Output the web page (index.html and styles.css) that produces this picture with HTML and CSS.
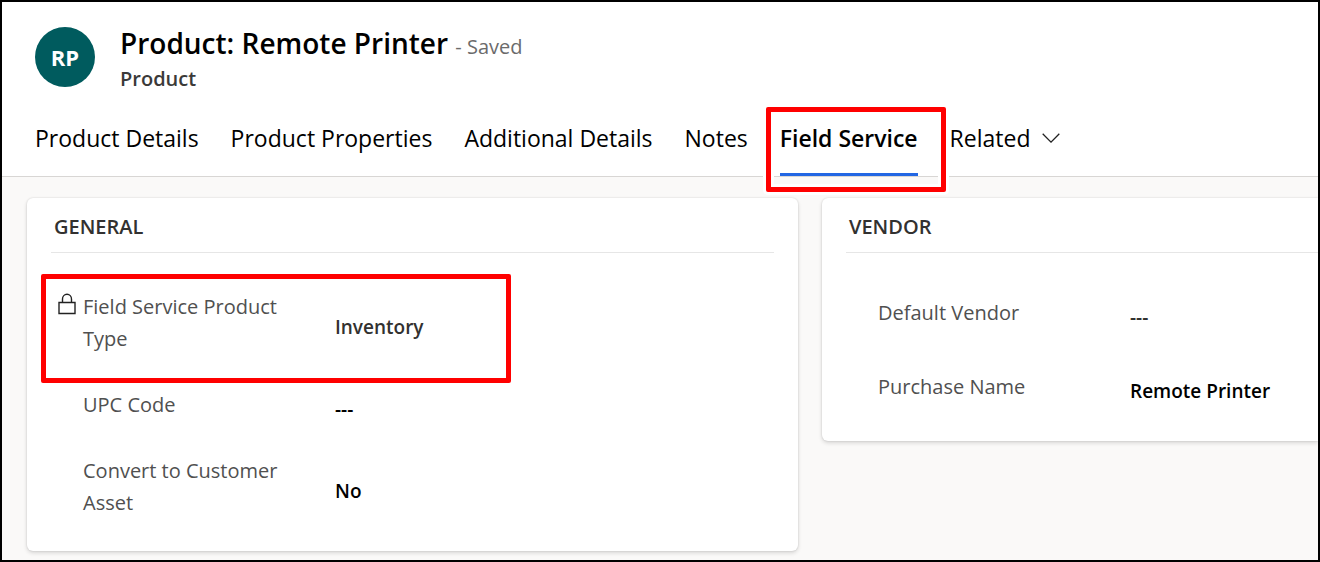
FILE: index.html
```html
<!DOCTYPE html>
<html lang="en">
<head>
<meta charset="utf-8">
<title>Product: Remote Printer</title>
<link rel="stylesheet" href="styles.css">
</head>
<body>
<div class="frame">
  <header class="record-header">
    <div class="record">
      <div class="avatar">RP</div>
      <div class="record-text">
        <h1 class="record-title">Product: Remote Printer <span class="record-state">- Saved</span></h1>
        <p class="record-entity">Product</p>
      </div>
    </div>
    <nav class="tabs" role="tablist">
      <button class="tab" role="tab" type="button">Product Details</button>
      <button class="tab" role="tab" type="button">Product Properties</button>
      <button class="tab" role="tab" type="button">Additional Details</button>
      <button class="tab" role="tab" type="button">Notes</button>
      <button class="tab tab-active" role="tab" type="button" aria-selected="true">Field Service</button>
      <button class="tab tab-menu" type="button">Related
        <svg class="chevron" viewBox="0 0 18 10" aria-hidden="true"><path d="M.7.8 9 9.100 17.300.8"/></svg>
      </button>
    </nav>
  </header>
  <main class="content">
    <section class="card">
      <h2 class="card-title">GENERAL</h2>
      <div class="fields">
        <div class="field field-marked">
          <svg class="lock" viewBox="0 0 18 22" aria-hidden="true"><path d="M1 9.500h16v11H1zM4.500 9.500V6a4.500 4.700 0 0 1 9 0v3.500"/></svg>
          <label class="field-label" for="type">Field Service Product Type</label>
          <select class="field-value value-locked" id="type" disabled><option>Inventory</option></select>
        </div>
        <div class="field">
          <label class="field-label" for="upc">UPC Code</label>
          <input class="field-value" id="upc" type="text" value="---">
        </div>
        <div class="field">
          <label class="field-label" for="convert">Convert to Customer Asset</label>
          <select class="field-value" id="convert"><option>No</option><option>Yes</option></select>
        </div>
      </div>
    </section>
    <section class="card card-bleed">
      <h2 class="card-title">VENDOR</h2>
      <div class="fields fields-loose">
        <div class="field">
          <label class="field-label" for="vendor">Default Vendor</label>
          <input class="field-value value-locked" id="vendor" type="text" value="---">
        </div>
        <div class="field">
          <label class="field-label" for="purchase">Purchase Name</label>
          <input class="field-value" id="purchase" type="text" value="Remote Printer">
        </div>
      </div>
    </section>
  </main>
</div>
</body>
</html>
```
FILE: styles.css
```css
* {
  box-sizing: border-box;
}

body {
  margin: 0;
  font-family: "Open Sans", "Noto Sans", sans-serif;
  font-size: 20px;
  color: #000;
}

.frame {
  display: flex;
  flex-direction: column;
  min-height: 100vh;
  border: 2px solid #000;
  background: #faf9f8;
  overflow: hidden;
}

.record-header {
  padding: 25px 33px 0;
  background: #fff;
  border-bottom: 1px solid #d8d6d4;
}

.record {
  display: flex;
  align-items: flex-start;
  gap: 25px;
}

.avatar {
  display: grid;
  place-items: center;
  width: 60px;
  height: 60px;
  border-radius: 50%;
  background: #005b5e;
  color: #fff;
  font-size: 22px;
  font-weight: 700;
}

.record-title {
  margin: 0;
  font-size: 28px;
  font-weight: 600;
  line-height: 32px;
}

.record-state {
  font-size: 20px;
  font-weight: 400;
  color: #6b6b6b;
}

.record-entity {
  margin: 0;
  font-weight: 600;
  line-height: 32px;
  color: #3b3a39;
}

.tabs {
  display: flex;
  gap: 32px;
  margin-top: 8px;
}

.tab {
  position: relative;
  padding: 0;
  border: 0;
  border-bottom: 3px solid transparent;
  background: none;
  font: inherit;
  font-size: 23px;
  line-height: 70px;
  white-space: nowrap;
  color: inherit;
}

.tab-active {
  font-weight: 600;
  border-bottom-color: #2266e3;
}

.tab-active::after,
.field-marked::after {
  content: "";
  position: absolute;
  border: 5px solid #f00;
  border-radius: 2px;
  box-shadow: 0 0 0 3px #fff, inset 0 0 0 3px #fff;
  pointer-events: none;
}

.tab-active::after {
  inset: 4px -28px -19px -14px;
}

.tab-menu {
  display: flex;
  align-items: center;
  gap: 11px;
}

.chevron {
  width: 18px;
  height: 10px;
  fill: none;
  stroke: #222;
  stroke-width: 1.300;
}

.content {
  display: grid;
  grid-template-columns: 771fr 496fr;
  align-items: start;
  gap: 24px;
  padding: 21px 0 9px 25px;
}

.card {
  min-width: 0;
  padding: 0 24px 32px;
  border-radius: 6px;
  background: #fff;
  box-shadow: 0 0 2px rgba(0, 0, 0, 0.140), 0 2px 4px rgba(0, 0, 0, 0.140);
}

.card-bleed {
  padding-right: 0;
  padding-bottom: 38px;
  border-radius: 6px 0 0 6px;
}

.card-title {
  margin: 0;
  padding: 13px 3px 9px;
  border-bottom: 1px solid #e6e6e6;
  font-size: 20px;
  font-weight: 600;
  line-height: 32px;
  color: #323130;
}

.fields {
  display: grid;
  gap: 34px;
  padding: 38px 0 0 32px;
}

.fields-loose {
  gap: 42px;
  padding-top: 44px;
}

.field {
  position: relative;
  display: grid;
  grid-template-columns: 208px minmax(0, 1fr);
  align-items: center;
  column-gap: 44px;
}

.field-label {
  line-height: 32px;
  color: #505050;
}

.field-value {
  appearance: none;
  width: 100%;
  padding: 8px 0 0;
  border: 0;
  background: none;
  font: inherit;
  font-size: 19px;
  font-weight: 600;
  line-height: 24px;
  color: #000;
  opacity: 1;
}

.value-locked {
  color: #323130;
}

.field-marked::after {
  inset: -17px 263px -28px -42px;
}

.lock {
  position: absolute;
  top: 2px;
  left: -25px;
  width: 18px;
  height: 22px;
  fill: none;
  stroke: #222;
  stroke-width: 1.400;
}
```
